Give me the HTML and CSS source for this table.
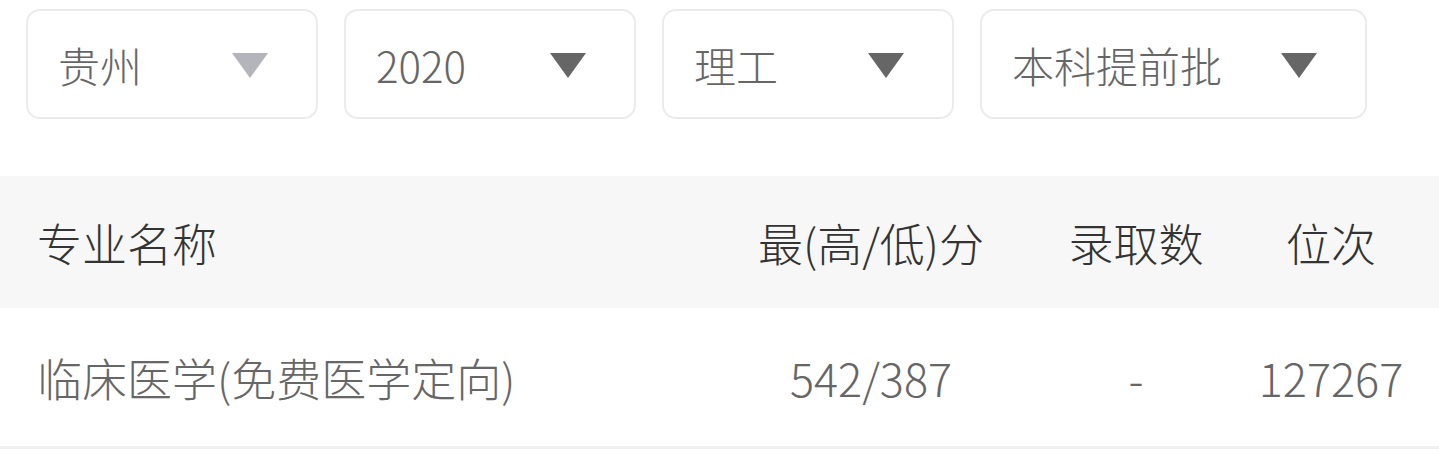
FILE: index.html
```html
<!DOCTYPE html>
<html lang="zh-CN">
<head>
<meta charset="utf-8">
<title>录取分数</title>
<link rel="stylesheet" href="styles.css">
</head>
<body>
<div class="filters">
  <div class="select">
    <span class="select-label">贵州</span>
    <span class="caret caret-muted"></span>
  </div>
  <div class="select">
    <span class="select-label">2020</span>
    <span class="caret"></span>
  </div>
  <div class="select">
    <span class="select-label">理工</span>
    <span class="caret"></span>
  </div>
  <div class="select select-wide">
    <span class="select-label">本科提前批</span>
    <span class="caret"></span>
  </div>
</div>
<div class="table">
  <div class="row head">
    <div class="cell cell-name">专业名称</div>
    <div class="cell">最(高/低)分</div>
    <div class="cell">录取数</div>
    <div class="cell">位次</div>
  </div>
  <div class="row body-row">
    <div class="cell cell-name">临床医学(免费医学定向)</div>
    <div class="cell">542/387</div>
    <div class="cell">-</div>
    <div class="cell">127267</div>
  </div>
</div>
</body>
</html>
```
FILE: styles.css
```css
html, body {
  margin: 0;
  padding: 0;
  background: #ffffff;
}
body {
  font-family: "Noto Sans CJK SC", "Noto Sans", sans-serif;
  font-weight: 300;
  width: 1439px;
  height: 473px;
  overflow: hidden;
}
.filters {
  display: flex;
  gap: 26px;
  padding: 9px 0 0 26px;
  height: 110px;
}
.select {
  box-sizing: border-box;
  width: 292px;
  height: 110px;
  border: 2px solid #ebebeb;
  border-radius: 14px;
  display: flex;
  align-items: center;
  justify-content: space-between;
  padding: 0 48px 0 30px;
  background: #fff;
}
.select-wide {
  width: 387px;
}
.select-label {
  font-size: 42px;
  color: #666666;
  line-height: 1;
  margin-top: 2px;
}
.caret {
  width: 0;
  height: 0;
  border-left: 18px solid transparent;
  border-right: 18px solid transparent;
  border-top: 25px solid #666666;
  margin-top: 2px;
}
.caret-muted {
  border-top-color: #b4b5ba;
}
.table {
  margin-top: 57px;
}
.row {
  display: grid;
  grid-template-columns: 1fr 340px 190px 200px;
  padding: 0 8px 0 37px;
  align-items: center;
}
.head {
  height: 132px;
  background: #f7f7f7;
  color: #333333;
}
.body-row {
  height: 138px;
  border-bottom: 3px solid #efefef;
  color: #666666;
}
.cell {
  font-size: 45px;
  line-height: 1;
  text-align: center;
  white-space: nowrap;
}
.cell-name {
  text-align: left;
}
```
